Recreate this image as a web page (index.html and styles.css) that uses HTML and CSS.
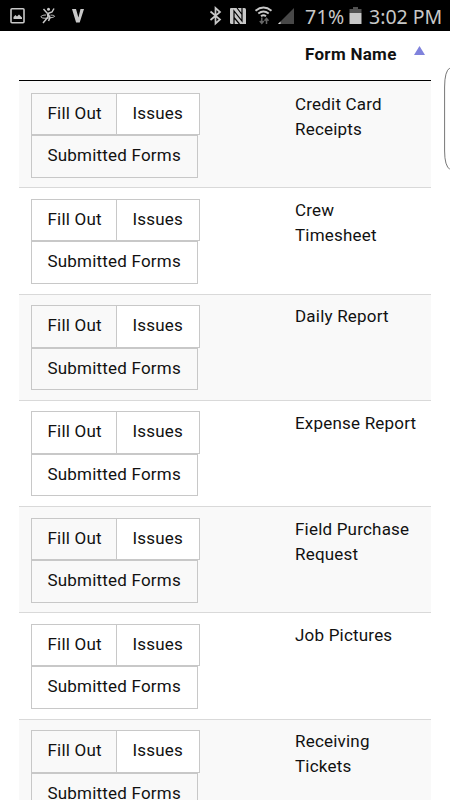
FILE: index.html
```html
<!DOCTYPE html>
<html lang="en">
<head>
<meta charset="utf-8">
<meta name="viewport" content="width=device-width">
<title>Forms</title>
<link rel="stylesheet" href="styles.css">
</head>
<body>
<header class="status">
  <svg class="status-icons" width="300" height="31" viewBox="0 0 300 31" fill="none" stroke="#c8c8c8">
    <rect x="11" y="8.800" width="13" height="14" rx="1" stroke-width="1.600"/>
    <path d="M13.500 19v-2l2-2 1.500 1.500 2-2 3 3V19z" fill="#c8c8c8" stroke="none"/>
    <circle cx="48.500" cy="9.300" r="1.500" fill="#c8c8c8" stroke="none"/>
    <path d="M43.500 9l4 4.500M54 8.500l-2 3.500-4 1.500 2 4-1.500 3.500M47.500 14l.5 3-5 6" stroke-width="1.500"/>
    <path d="M46 15c-4 0-6 1.500-4.500 2.500 2 1.500 11.500 .5 13-1 .5-1-2-1.500-4-1.300" stroke-width="1"/>
    <path d="M72 9h4l2.400 8.500L80.500 9H84l-4.300 13.500h-3.600z" fill="#c8c8c8" stroke="none"/>
    <path d="M210.500 11.500l9.500 8-4.500 4V8l4.500 4-9.500 8" stroke-width="1.700"/>
    <path d="M231 8h13.500q1.500 0 1.500 1.500V24h-14.500q-1.500 0-1.500-1.500V9q0-1 1-1z" fill="#c8c8c8" stroke="none"/>
    <path d="M234 24V11l8 10V8M237 8l5 6.500M234 17.500l5.500 6.500" stroke="#000" stroke-width="1.200"/>
    <path d="M255.500 10.700q8-6.500 16 0M258.300 13.600q5.200-4.200 10.400 0M261 16.300q2.500-2 5 0" stroke-width="1.900"/>
    <path d="M261.800 17.500V23m-2-2l2 2.300 2-2.300M266.500 24v-5m-2 1.800l2-2.300 2 2.300" stroke="#666" stroke-width="1.500"/>
    <path d="M294 8v16h-16z" fill="#484848" stroke="none"/>
    <path d="M280.500 21.500V24H278z" fill="#ddd" stroke="none"/>
  </svg>
  <span class="percent">71%</span>
  <svg class="battery" width="13" height="31" viewBox="0 0 13 31">
    <path d="M4 7h5v2h3.500v4H.5V9H4z" fill="#505050"/>
    <path d="M.5 13h12v11H.5z" fill="#c8c8c8"/>
  </svg>
  <span class="clock">3:02 PM</span>
</header>
<main class="page">
  <table class="forms">
    <thead>
      <tr><th></th><th class="sorted">Form Name<svg class="arrow" width="11" height="9" viewBox="0 0 11 9"><path d="M5.500 0L11 9H0z" fill="#7f82dc"/></svg></th></tr>
    </thead>
    <tbody>
      <tr><td><div class="actions"><a class="btn">Fill Out</a><a class="btn issues">Issues</a><a class="btn wide">Submitted Forms</a></div></td><td class="name">Credit Card Receipts</td></tr>
      <tr><td><div class="actions"><a class="btn">Fill Out</a><a class="btn issues">Issues</a><a class="btn wide">Submitted Forms</a></div></td><td class="name">Crew<br>Timesheet</td></tr>
      <tr><td><div class="actions"><a class="btn">Fill Out</a><a class="btn issues">Issues</a><a class="btn wide">Submitted Forms</a></div></td><td class="name">Daily Report</td></tr>
      <tr><td><div class="actions"><a class="btn">Fill Out</a><a class="btn issues">Issues</a><a class="btn wide">Submitted Forms</a></div></td><td class="name">Expense Report</td></tr>
      <tr><td><div class="actions"><a class="btn">Fill Out</a><a class="btn issues">Issues</a><a class="btn wide">Submitted Forms</a></div></td><td class="name">Field Purchase Request</td></tr>
      <tr><td><div class="actions"><a class="btn">Fill Out</a><a class="btn issues">Issues</a><a class="btn wide">Submitted Forms</a></div></td><td class="name">Job Pictures</td></tr>
      <tr><td><div class="actions"><a class="btn">Fill Out</a><a class="btn issues">Issues</a><a class="btn wide">Submitted Forms</a></div></td><td class="name">Receiving Tickets</td></tr>
    </tbody>
  </table>
</main>
<svg class="edge-handle" width="6" height="104" viewBox="0 0 6 104"><path d="M6 .8Q.6 4 .6 20v64Q.6 99 6 102.500" fill="#fff" stroke="#777" stroke-width="1"/></svg>
</body>
</html>
```
FILE: styles.css
```css
* { box-sizing: border-box; }
html, body { height: 800px; overflow: hidden; }
body {
  margin: 0;
  position: relative;
  background: #fff;
  color: #111;
  font: 400 17px/25px Roboto, sans-serif;
  letter-spacing: 0.2px;
}
.status {
  display: flex;
  height: 31px;
  background: #000;
  color: #c8c8c8;
  font: 400 19.500px/33px "Noto Sans", sans-serif;
  letter-spacing: 0;
  white-space: nowrap;
}
.status-icons { flex: none; }
.percent { width: 49px; padding-left: 5px; letter-spacing: 0.4px; }
.battery { flex: none; }
.clock { padding-left: 7px; }
.page { padding: 0 19px; }
.forms {
  width: 412px;
  table-layout: fixed;
  border-collapse: separate;
  border-spacing: 0;
}
th {
  height: 50px;
  padding: 0;
  border-bottom: 1px solid #000;
  text-align: left;
  vertical-align: top;
}
th:first-child { width: 264px; }
.sorted {
  padding: 11px 0 0 22px;
  font-weight: 700;
  letter-spacing: 0.3px;
}
.arrow { margin-left: 17px; vertical-align: 5px; }
td {
  height: 106.250px;
  padding: 10.500px 12px 0;
  border-bottom: 1px solid #d9d9d9;
  vertical-align: top;
}
tbody tr:nth-child(odd) { background: #f9f9f9; }
tbody .name { padding: 9.800px 10px 0 12px; }
tbody tr:first-child td { height: 107.250px; padding-top: 11.500px; }
tbody tr:first-child .name { padding-top: 10.500px; }
.actions {
  display: grid;
  grid-template-columns: 85px 84px;
  grid-template-rows: 42.500px 42.500px;
}
.btn {
  display: block;
  border: 1px solid #c8c8c8;
  padding-left: 15.500px;
  line-height: 38px;
  white-space: nowrap;
}
.btn.issues { background: #fff; }
.btn:first-child { margin-right: -1px; }
.btn.wide { grid-column: 1 / 3; width: 167px; }
.edge-handle { position: absolute; top: 67px; left: 444px; }
```
